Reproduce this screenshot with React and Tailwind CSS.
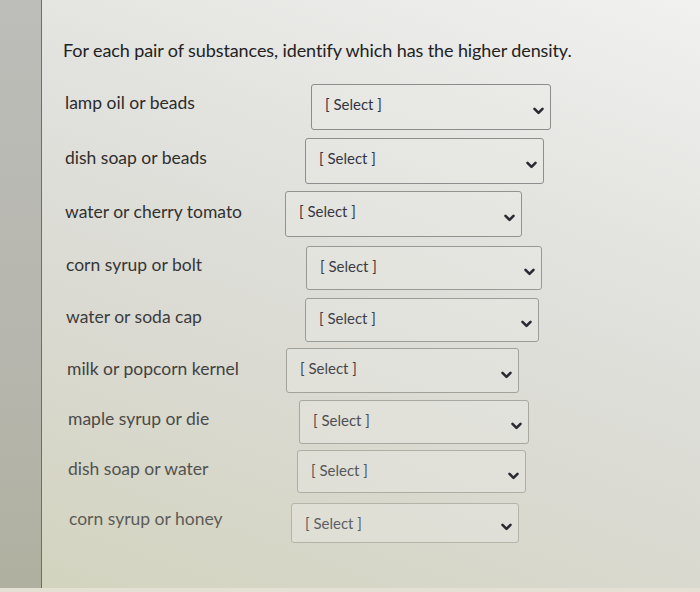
import React from "react";

const rows = [
  { label: "lamp oil or beads", rowCls: "h-[54px] pl-[23px]", labelCls: "w-[246px] mt-[7px] text-[#2c2c2c]", boxCls: "w-[240px] h-[46px] border-[#8c8c8c] text-[#35353f]" },
  { label: "dish soap or beads", rowCls: "h-[53px] pl-[23px]", labelCls: "w-[240px] mt-[8px] text-[#2e2e2e]", boxCls: "w-[239px] h-[46px] border-[#8e8e8e] text-[#36363f]" },
  { label: "water or cherry tomato", rowCls: "h-[55px] pl-[23px]", labelCls: "w-[220px] mt-[9px] text-[#313131]", boxCls: "w-[237px] h-[46px] border-[#929290] text-[#383840]" },
  { label: "corn syrup or bolt", rowCls: "h-[52px] pl-[24px]", labelCls: "w-[240px] mt-[7px] text-[#363636]", boxCls: "w-[236px] h-[44px] border-[#989894] text-[#3c3c44]" },
  { label: "water or soda cap", rowCls: "h-[50px] pl-[24px]", labelCls: "w-[239px] mt-[7px] text-[#3c3c3c]", boxCls: "w-[234px] h-[44px] border-[#9c9c98] text-[#414148]" },
  { label: "milk or popcorn kernel", rowCls: "h-[52px] pl-[25px]", labelCls: "w-[219px] mt-[9px] text-[#424242]", boxCls: "w-[233px] h-[45px] border-[#a2a29c] text-[#46464c]" },
  { label: "maple syrup or die", rowCls: "h-[50px] pl-[26px]", labelCls: "w-[231px] mt-[7px] text-[#4a4a48]", boxCls: "w-[230px] h-[44px] border-[#a8a8a0] text-[#4e4e52]" },
  { label: "dish soap or water", rowCls: "h-[53px] pl-[26px]", labelCls: "w-[229px] mt-[7px] text-[#52524f]", boxCls: "w-[229px] h-[43px] border-[#aeaea4] text-[#56565a]" },
  { label: "corn syrup or honey", rowCls: "h-[45px] pl-[27px]", labelCls: "w-[222px] mt-[4px] text-[#5c5c58]", boxCls: "w-[228px] h-[40px] border-[#b4b4a8] text-[#606064]" },
];

function Chevron() {
  return (
    <svg width="11" height="8" viewBox="0 0 11 8" className="shrink-0">
      <path d="M1.5 1.8 L5.5 5.8 L9.5 1.8" fill="none" stroke="#2a2a32" strokeWidth="2.6" strokeLinecap="round" strokeLinejoin="round" />
    </svg>
  );
}

export default function App() {
  return (
    <div className="w-[700px] h-[592px] flex flex-col overflow-hidden font-['Lato','Open_Sans',sans-serif]">
      <div className="flex flex-1">
        {/* dim strip on the left */}
        <div className="w-[42px] shrink-0 border-r border-[#6f6f6a] bg-[linear-gradient(180deg,#bdbdb9_0%,#b6b6ae_60%,#b0b0a0_100%)]" />

        <div className="flex-1 bg-[linear-gradient(200deg,#f1f1ef_0%,#e2e2df_35%,#dadad2_65%,#d3d4bf_100%)]">
          <h1 className="pl-[21px] pt-[38px] text-[18px] leading-[24px] text-[#222222] tracking-[-0.1px]">
            For each pair of substances, identify which has the higher density.
          </h1>

          <div className="mt-[22px]">
            {rows.map((r) => (
              <div key={r.label} className={`flex items-start ${r.rowCls}`}>
                <div className={`shrink-0 text-[17.5px] leading-[24px] ${r.labelCls}`}>{r.label}</div>
                <div
                  className={`shrink-0 flex justify-between rounded-[3px] border bg-[#ebebe7]/40 pl-[13px] pr-[6px] ${r.boxCls}`}
                >
                  <span className="pt-[7px] text-[15px] leading-[24px]">[ Select ]</span>
                  <span className="self-center pt-[8px]">
                    <Chevron />
                  </span>
                </div>
              </div>
            ))}
          </div>
        </div>
      </div>
      <div className="h-[4px] bg-[#e4e1d4]" />
    </div>
  );
}
